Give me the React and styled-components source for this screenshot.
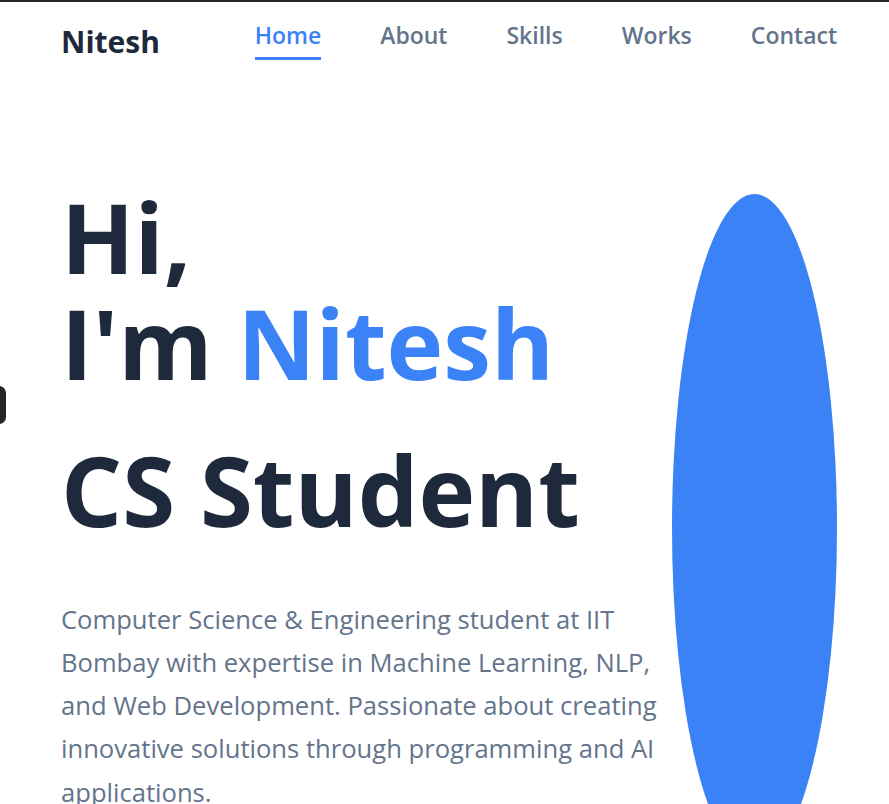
import React from "react";
import styled, { createGlobalStyle } from "styled-components";

const Global = createGlobalStyle`
  html, body { margin: 0; padding: 0; background: #ffffff; }
  body { font-family: "Open Sans", "Noto Sans", sans-serif; overflow: hidden; }
  * { box-sizing: border-box; }
`;

const Page = styled.div`
  width: 889px;
  height: 804px;
  overflow: hidden;
  border-top: 2px solid #262626;
  position: relative;
`;

const Header = styled.header`
  display: flex;
  justify-content: space-between;
  align-items: flex-start;
  padding: 22px 52px 0 61px;
  height: 86px;
`;

const Logo = styled.div`
  font-size: 30px;
  font-weight: 700;
  line-height: 1;
  color: #1e293b;
  margin-top: 3px;
`;

const Nav = styled.nav`
  display: flex;
  gap: 59px;
`;

const NavLink = styled.a`
  font-size: 23px;
  font-weight: 600;
  line-height: 1;
  color: ${(p) => (p.$active ? "#3b82f6" : "#64748b")};
  text-decoration: none;
  padding-bottom: 10px;
  border-bottom: 3px solid ${(p) => (p.$active ? "#3b82f6" : "transparent")};
`;

const Hero = styled.section`
  display: flex;
  justify-content: space-between;
  align-items: flex-start;
  padding: 0 52px 0 61px;
`;

const TextCol = styled.div`
  width: 600px;
  padding-top: 96px;
`;

const Title = styled.h1`
  margin: 0;
  font-size: 96px;
  font-weight: 700;
  line-height: 1.1;
  color: #1e293b;
`;

const Accent = styled.span`
  color: #3b82f6;
`;

const Subtitle = styled.h2`
  margin: 42px 0 0;
  font-size: 96px;
  font-weight: 700;
  line-height: 1.1;
  color: #1e293b;
`;

const Lead = styled.p`
  margin: 55px 0 0;
  font-size: 25.6px;
  line-height: 43.2px;
  color: #64748b;
  width: 605px;
`;

const Blob = styled.div`
  flex: none;
  width: 165px;
  height: 668px;
  margin-top: 106px;
  border-radius: 50%;
  background: #3b82f6;
`;

const SideTab = styled.div`
  position: absolute;
  left: -30px;
  top: 384px;
  width: 36px;
  height: 38px;
  border-radius: 7px;
  background: #262626;
`;

export default function App() {
  return (
    <>
      <Global />
      <Page>
        <Header>
          <Logo>Nitesh</Logo>
          <Nav>
            <NavLink $active href="#">Home</NavLink>
            <NavLink href="#">About</NavLink>
            <NavLink href="#">Skills</NavLink>
            <NavLink href="#">Works</NavLink>
            <NavLink href="#">Contact</NavLink>
          </Nav>
        </Header>
        <Hero>
          <TextCol>
            <Title>
              Hi,
              <br />
              I'm <Accent>Nitesh</Accent>
            </Title>
            <Subtitle>CS Student</Subtitle>
            <Lead>
              Computer Science &amp; Engineering student at IIT Bombay with expertise in
              Machine Learning, NLP, and Web Development. Passionate about creating
              innovative solutions through programming and AI applications.
            </Lead>
          </TextCol>
          <Blob />
        </Hero>
        <SideTab />
      </Page>
    </>
  );
}
